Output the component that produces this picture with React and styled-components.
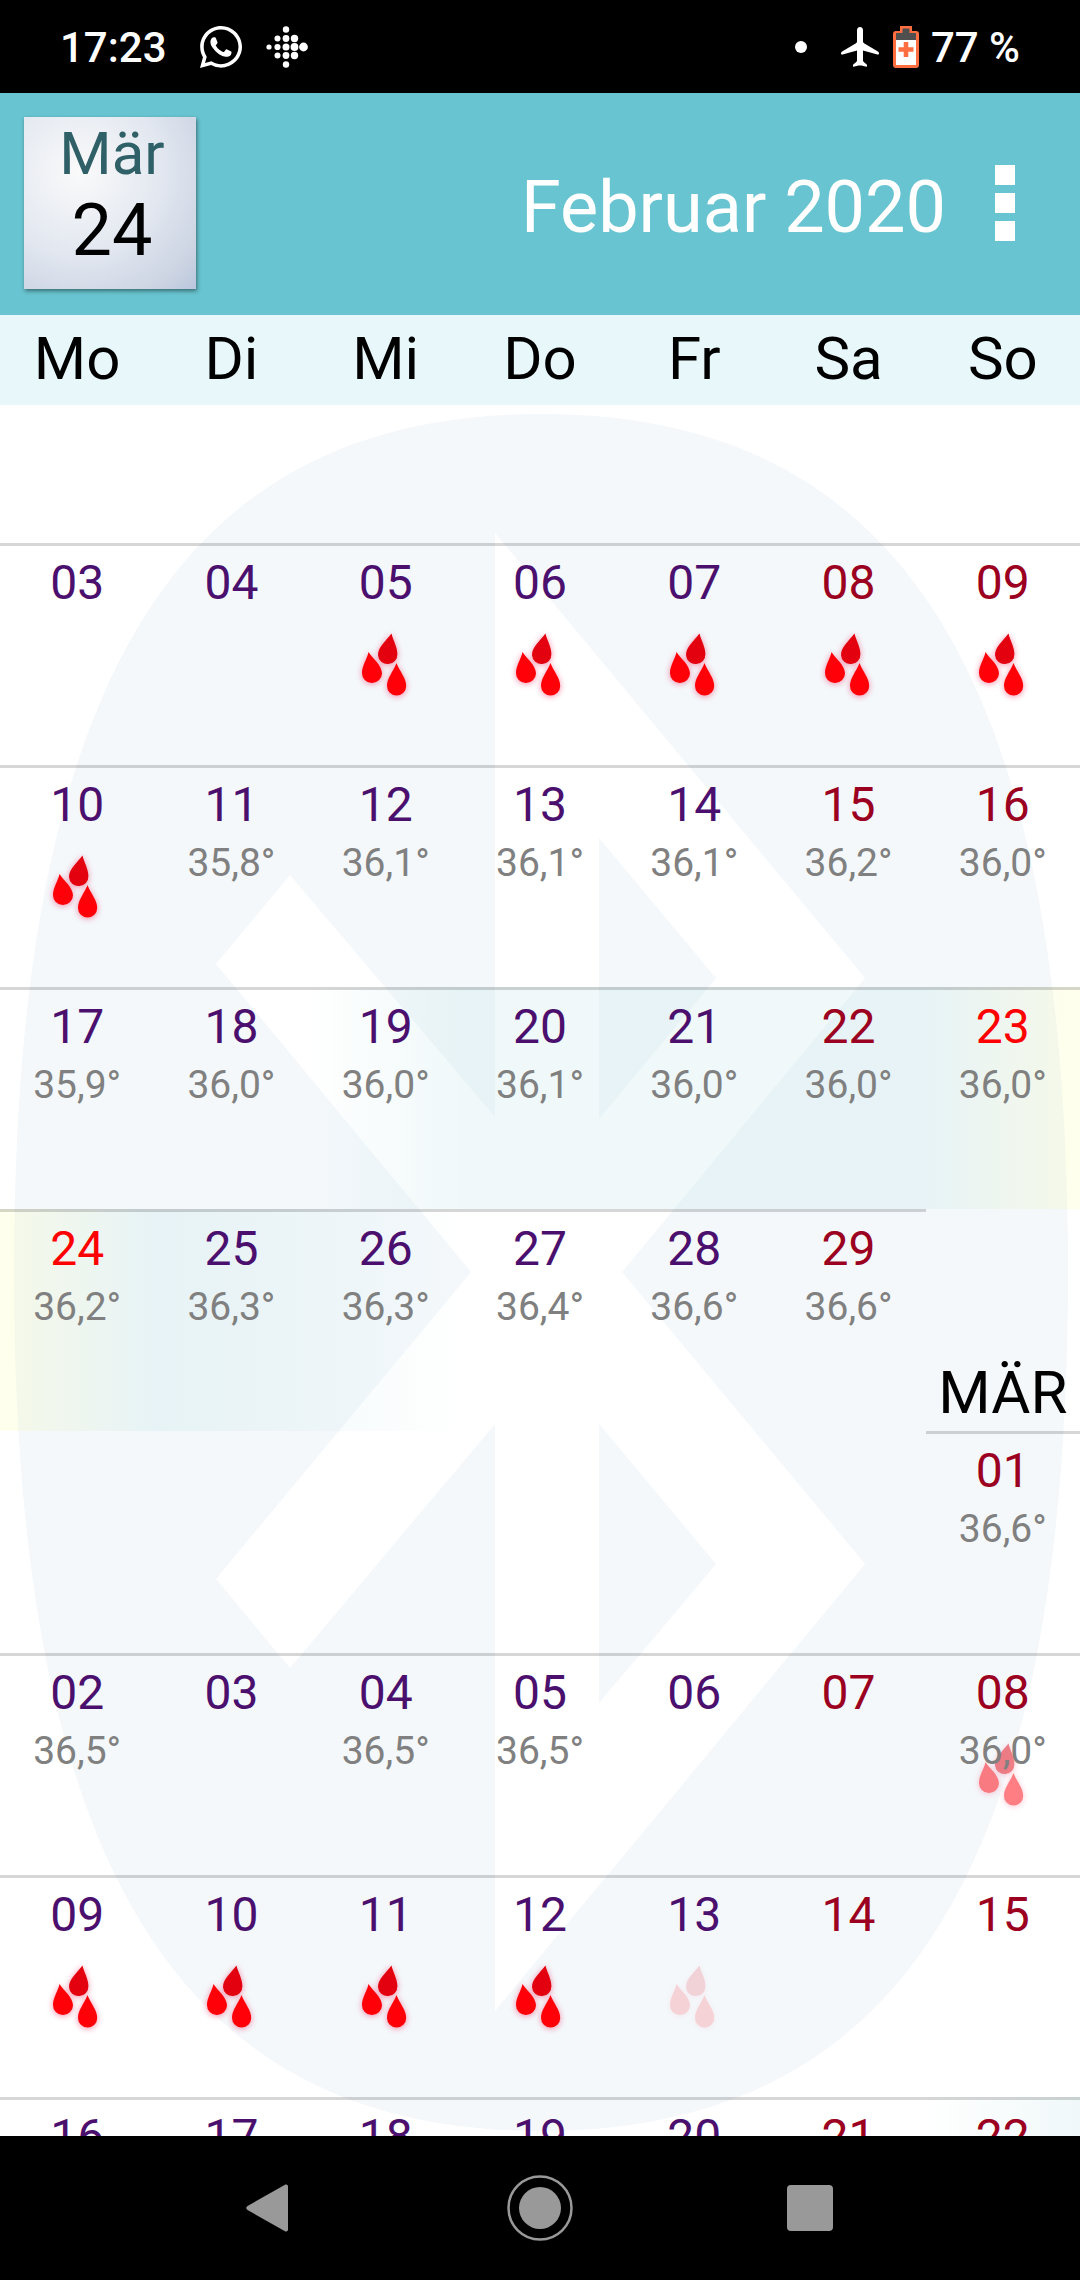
import React from 'react';
import styled, { createGlobalStyle, css } from 'styled-components';
import { FaWhatsapp } from 'react-icons/fa';

const GlobalStyle = createGlobalStyle`
  * {
    box-sizing: border-box;
  }
  body {
    margin: 0;
    background: #000;
    font-family: Roboto, sans-serif;
  }
  button {
    border: none;
    padding: 0;
    background: none;
    font: inherit;
    cursor: pointer;
  }
`;

const Screen = styled.div`
  height: 100vh;
  display: flex;
  flex-direction: column;
  overflow: hidden;
`;

const StatusBar = styled.div`
  flex: none;
  height: 93px;
  padding: 0 60px;
  display: flex;
  align-items: center;
  justify-content: space-between;
  background: #000;
  color: #fff;
  font-size: 42px;
  font-weight: 500;
  line-height: 50px;
`;

const StatusGroup = styled.div`
  display: flex;
  align-items: center;
  gap: ${({ $gap }) => $gap}px;
`;

const StatusText = styled.span`
  padding-top: 3px;
`;

const Dot = styled.span`
  width: 12px;
  height: 12px;
  margin-right: 22px;
  border-radius: 50%;
  background: #fff;
`;

const Header = styled.header`
  flex: none;
  height: 222px;
  padding: 0 50px 2px 24px;
  display: flex;
  align-items: center;
  background: #68c4d0;
`;

const TodayButton = styled.button`
  width: 172px;
  height: 172px;
  padding: 2px 0 0 4px;
  display: flex;
  flex-direction: column;
  align-items: center;
  background: radial-gradient(circle at 32% 32%, #fafafa 0%, #e2e7f0 50%, #cbd3e2 85%, #abbdd8 110%);
  box-shadow: 1px 2px 4px rgba(0, 0, 0, 0.45);
`;

const TodayMonth = styled.span`
  font-size: 60px;
  line-height: 70px;
  color: #2f6067;
`;

const TodayDay = styled.span`
  font-size: 72px;
  line-height: 84px;
  color: #000;
`;

const Title = styled.h1`
  flex: 1;
  margin: 0;
  padding-top: 10px;
  font-size: 72px;
  font-weight: 400;
  line-height: 84px;
  text-align: right;
  color: #fff;
`;

const MenuButton = styled.button`
  width: 50px;
  margin-left: 34px;
  padding: 24px 15px;
  display: flex;
  flex-direction: column;
  gap: 8px;
`;

const MenuSquare = styled.span`
  height: 20px;
  background: #fff;
`;

const Calendar = styled.main`
  flex: 1;
  min-height: 0;
  position: relative;
  z-index: 0;
  overflow: hidden;
  background: #fff;
`;

const Watermark = styled.svg`
  position: absolute;
  z-index: -1;
  top: 90px;
  left: 0;
  width: 100%;
  height: calc(100% - 90px);
`;

const Table = styled.table`
  width: 100%;
  table-layout: fixed;
  border-collapse: separate;
  border-spacing: 0;
`;

const Weekday = styled.th`
  height: 90px;
  padding: 9px 0 11px;
  background: #e7f7fa;
  color: #000;
  font-size: 60px;
  font-weight: 400;
  line-height: 70px;
`;

const SpacerCell = styled.td`
  height: 138px;
  padding: 0;
`;

const tints = {
  rise: 'rgba(180, 222, 226, 0), rgba(180, 222, 226, 0.2)',
  full: 'rgba(180, 222, 226, 0.2), rgba(180, 222, 226, 0.2)',
  fall: 'rgba(180, 222, 226, 0.2), rgba(180, 222, 226, 0.12)',
  fade: 'rgba(180, 222, 226, 0.12), rgba(180, 222, 226, 0)',
  toPeak: 'rgba(180, 222, 226, 0.2), rgba(255, 255, 0, 0.07) 92%',
  fromPeak: 'rgba(255, 255, 0, 0.07) 8%, rgba(180, 222, 226, 0.2)',
};

const Cell = styled.td`
  position: relative;
  z-index: 0;
  height: 222px;
  padding: 9px 0 0;
  vertical-align: top;
  text-align: center;
  border-top: 3px solid ${({ $line }) => ($line ? 'rgba(0, 0, 0, 0.16)' : 'transparent')};
  ${({ $tint }) =>
    $tint &&
    css`
      background: linear-gradient(to right, ${tints[$tint]}) border-box;
    `}
`;

const dayColors = {
  week: '#4b106e',
  weekend: '#9b0021',
  peak: '#ff0000',
};

const DayNumber = styled.div`
  font-size: 48px;
  line-height: 56px;
  color: ${({ $kind }) => dayColors[$kind]};
`;

const Temperature = styled.div`
  margin-top: 7px;
  font-size: 39px;
  line-height: 46px;
  color: #808080;
`;

const MonthCell = styled(Cell)`
  padding: 0 0 3px;
  vertical-align: bottom;
  font-size: 60px;
  line-height: 70px;
  color: #000;
`;

const DropsIcon = styled.svg`
  position: absolute;
  z-index: -1;
  top: 81px;
  left: calc(50% - 30px);
  width: 60px;
  height: 76px;
  overflow: visible;
  opacity: ${({ $strength }) => $strength};
  filter: drop-shadow(0 1px 3px rgba(240, 0, 60, 0.45));
`;

const NavBar = styled.nav`
  flex: none;
  height: 144px;
  padding: 0 12.5%;
  display: grid;
  grid-template-columns: repeat(3, 1fr);
  background: #000;
`;

const NavButton = styled.button`
  display: flex;
  align-items: center;
  justify-content: center;
`;

const weekdays = ['Mo', 'Di', 'Mi', 'Do', 'Fr', 'Sa', 'So'];

const weeks = [
  [
    { day: '03' },
    { day: '04' },
    { day: '05', drops: 1 },
    { day: '06', drops: 1 },
    { day: '07', drops: 1 },
    { day: '08', drops: 1 },
    { day: '09', drops: 1 },
  ],
  [
    { day: '10', drops: 1 },
    { day: '11', temp: '35,8°' },
    { day: '12', temp: '36,1°' },
    { day: '13', temp: '36,1°' },
    { day: '14', temp: '36,1°' },
    { day: '15', temp: '36,2°' },
    { day: '16', temp: '36,0°' },
  ],
  [
    { day: '17', temp: '35,9°' },
    { day: '18', temp: '36,0°' },
    { day: '19', temp: '36,0°', tint: 'rise' },
    { day: '20', temp: '36,1°', tint: 'full' },
    { day: '21', temp: '36,0°', tint: 'full' },
    { day: '22', temp: '36,0°', tint: 'full' },
    { day: '23', temp: '36,0°', tint: 'toPeak', peak: true },
  ],
  [
    { day: '24', temp: '36,2°', tint: 'fromPeak', peak: true },
    { day: '25', temp: '36,3°', tint: 'fall' },
    { day: '26', temp: '36,3°', tint: 'fade' },
    { day: '27', temp: '36,4°' },
    { day: '28', temp: '36,6°' },
    { day: '29', temp: '36,6°' },
    { month: 'MÄR' },
  ],
  [{}, {}, {}, {}, {}, {}, { day: '01', temp: '36,6°' }],
  [
    { day: '02', temp: '36,5°' },
    { day: '03' },
    { day: '04', temp: '36,5°' },
    { day: '05', temp: '36,5°' },
    { day: '06' },
    { day: '07' },
    { day: '08', temp: '36,0°', drops: 0.5 },
  ],
  [
    { day: '09', drops: 1 },
    { day: '10', drops: 1 },
    { day: '11', drops: 1 },
    { day: '12', drops: 1 },
    { day: '13', drops: 0.15 },
    { day: '14' },
    { day: '15' },
  ],
  [
    { day: '16' },
    { day: '17' },
    { day: '18' },
    { day: '19' },
    { day: '20' },
    { day: '21' },
    { day: '22', tint: 'rise' },
  ],
];

const fitbitDots = [
  [3, 21, 2.6],
  [11.5, 12.5, 3],
  [11.5, 21, 3.1],
  [11.5, 29.5, 3],
  [20, 3.5, 3.2],
  [20, 12.5, 3.4],
  [20, 21, 3.5],
  [20, 29.5, 3.4],
  [20, 38.5, 3.2],
  [28.5, 12.5, 3.7],
  [28.5, 21, 3.9],
  [28.5, 29.5, 3.7],
  [37.5, 21, 4.4],
];

const FitbitIcon = () => (
  <svg width="42" height="42" viewBox="0 0 42 42" fill="#fff" aria-hidden="true">
    {fitbitDots.map(([x, y, r]) => (
      <circle key={`${x}-${y}`} cx={x} cy={y} r={r} />
    ))}
  </svg>
);

const PlaneIcon = () => (
  <svg width="40" height="42" viewBox="0 0 40 42" fill="#fff" aria-hidden="true">
    <path d="M19 1c-2 0-3 1.500-3 3.500V15.500c0 .8-.4 1.300-1 1.700L1.500 25.200C.5 25.800 0 26.500 0 27.500c0 1 .6 1.300 1.600 1L16 24.500v9.500c0 1-.3 1.600-1 2.200l-2.500 2c-1 .9-.8 2.800.4 2.600C15 40.200 16.500 39.500 19 39.500s4 .7 6.100 1.300c1.200.2 1.400-1.700.4-2.600l-2.500-2c-.7-.6-1-1.200-1-2.200v-9.500l14.400 4c1 .3 1.600 0 1.600-1 0-1-.5-1.700-1.500-2.300L23 17.200c-.6-.4-1-.9-1-1.700V4.500C22 2.500 21 1 19 1z" />
  </svg>
);

const BatteryIcon = () => (
  <svg width="26" height="42" viewBox="0 0 26 42" aria-hidden="true">
    <path d="M7 0h12v5h4a3 3 0 0 1 3 3v31a3 3 0 0 1-3 3H3a3 3 0 0 1-3-3V8a3 3 0 0 1 3-3h4z" fill="#ff6e40" />
    <path d="M9.500 2.500h7V7H23v7H3V7h6.500z" fill="#4f4f4f" />
    <path d="M3 14h20v25H3z" fill="#fff" />
    <path d="M10.700 16h4.600v5.300H20.500v4.400h-5.200V31h-4.600v-5.300H5.500v-4.400h5.200z" fill="#ff6e40" />
  </svg>
);

const Drops = ({ strength }) => (
  <DropsIcon viewBox="0 0 60 76" $strength={strength} aria-label="Periode">
    <path d="M12.500 25C16 31 26 38 26 46.500A10 9.800 0 0 1 6 46C5.800 39 11 32 12.500 25z" fill="#ff0009" />
    <path d="M35.500 6.500C29 15 22 20 22 28A9.600 9.500 0 0 0 41.400 27C41.400 20 37 13 35.500 6.500z" fill="#e3000f" />
    <path d="M40.500 36C37 45 31 51 31 59A9.600 9.400 0 0 0 50.200 59C50.200 51 44 45 40.500 36z" fill="#ff0009" />
  </DropsIcon>
);

const CalendarWatermark = () => (
  <Watermark viewBox="0 0 1080 1731" preserveAspectRatio="none" aria-hidden="true">
    <path
      d="M541 9C904 9 1068 276 1068 867S904 1726 541 1726 14 1458 14 867 178 9 541 9z"
      fill="#f4f8fb"
    />
    <path
      d="M495 128L865 573 622 867 865 1159 495 1606V1019L290 1263 216 1174 471 867 216 559 290 470 495 712z"
      fill="#fff"
    />
    <path d="M599 433L716 573 599 714zM599 1019L716 1159 599 1298z" fill="#f4f8fb" />
  </Watermark>
);

const dayKind = (entry, column) => {
  if (entry.peak) return 'peak';
  return column > 4 ? 'weekend' : 'week';
};

const Day = ({ entry, column }) => {
  if (entry.month) {
    return <MonthCell>{entry.month}</MonthCell>;
  }

  return (
    <Cell $line={Boolean(entry.day)} $tint={entry.tint}>
      {entry.day && <DayNumber $kind={dayKind(entry, column)}>{entry.day}</DayNumber>}
      {entry.temp && <Temperature>{entry.temp}</Temperature>}
      {entry.drops && <Drops strength={entry.drops} />}
    </Cell>
  );
};

const App = () => (
  <Screen>
    <GlobalStyle />
    <StatusBar>
      <StatusGroup $gap={30}>
        <StatusText>17:23</StatusText>
        <StatusGroup $gap={21}>
          <FaWhatsapp size={48} />
          <FitbitIcon />
        </StatusGroup>
      </StatusGroup>
      <StatusGroup $gap={12}>
        <Dot />
        <PlaneIcon />
        <BatteryIcon />
        <StatusText>77 %</StatusText>
      </StatusGroup>
    </StatusBar>

    <Header>
      <TodayButton type="button">
        <TodayMonth>Mär</TodayMonth>
        <TodayDay>24</TodayDay>
      </TodayButton>
      <Title>Februar 2020</Title>
      <MenuButton type="button" aria-label="Menü">
        <MenuSquare />
        <MenuSquare />
        <MenuSquare />
      </MenuButton>
    </Header>

    <Calendar>
      <CalendarWatermark />
      <Table>
        <thead>
          <tr>
            {weekdays.map((name) => (
              <Weekday key={name} scope="col">
                {name}
              </Weekday>
            ))}
          </tr>
        </thead>
        <tbody>
          <tr>
            <SpacerCell colSpan={7} />
          </tr>
          {weeks.map((week, row) => (
            <tr key={row}>
              {week.map((entry, column) => (
                <Day key={column} entry={entry} column={column} />
              ))}
            </tr>
          ))}
        </tbody>
      </Table>
    </Calendar>

    <NavBar>
      <NavButton type="button" aria-label="Zurück">
        <svg width="48" height="48" viewBox="0 0 48 48" fill="#999">
          <path d="M1.500 22L39 .8c1.500-.8 3 0 3 1.700v43c0 1.700-1.500 2.500-3 1.700L1.500 26c-1.700-1-1.700-3 0-4z" />
        </svg>
      </NavButton>
      <NavButton type="button" aria-label="Startseite">
        <svg width="66" height="66" viewBox="0 0 66 66">
          <circle cx="33" cy="33" r="31.500" fill="none" stroke="#999" strokeWidth="2.500" />
          <circle cx="33" cy="33" r="21" fill="#999" />
        </svg>
      </NavButton>
      <NavButton type="button" aria-label="Letzte Apps">
        <svg width="46" height="46" viewBox="0 0 46 46">
          <rect width="46" height="46" rx="4" fill="#999" />
        </svg>
      </NavButton>
    </NavBar>
  </Screen>
);

export default App;
